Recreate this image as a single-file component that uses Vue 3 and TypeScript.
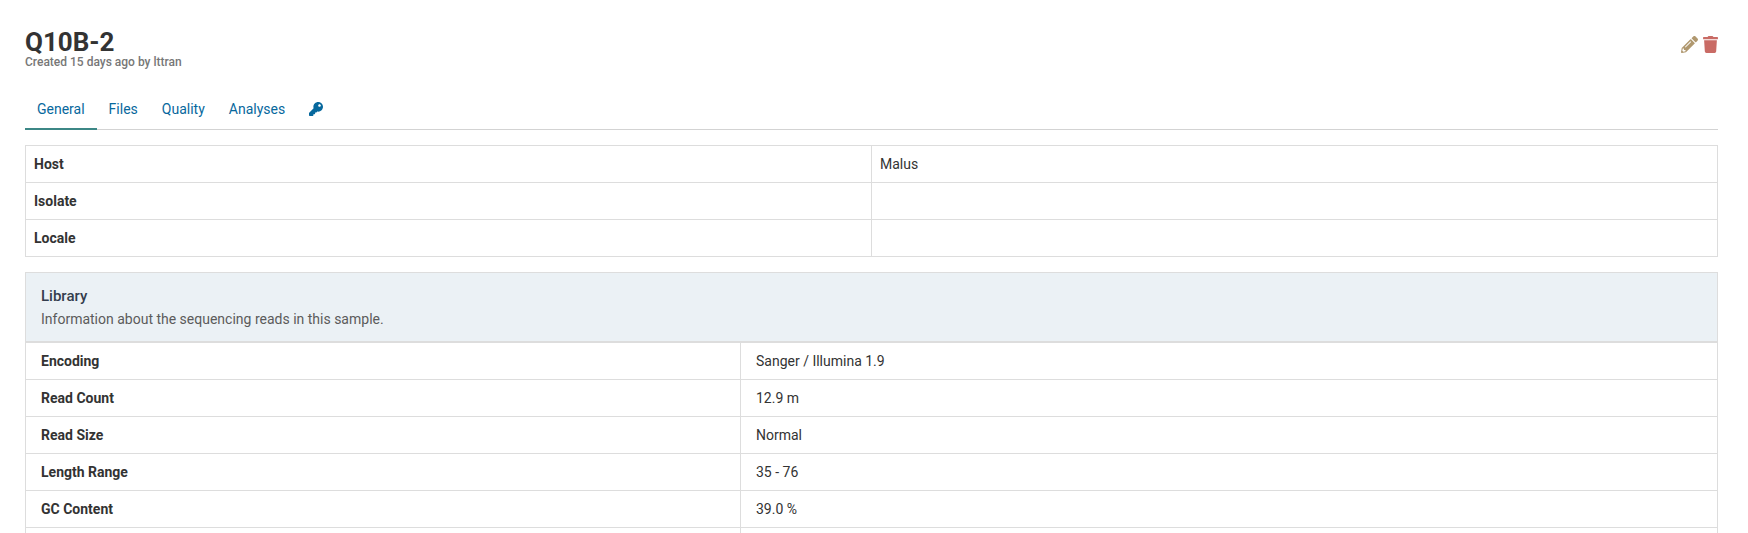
<script setup lang="ts">
interface Row {
  label: string
  value: string
}

const tabs: string[] = ['General', 'Files', 'Quality', 'Analyses']
const active = 'General'

const metadata: Row[] = [
  { label: 'Host', value: 'Malus' },
  { label: 'Isolate', value: '' },
  { label: 'Locale', value: '' },
]

const library: Row[] = [
  { label: 'Encoding', value: 'Sanger / Illumina 1.9' },
  { label: 'Read Count', value: '12.9 m' },
  { label: 'Read Size', value: 'Normal' },
  { label: 'Length Range', value: '35 - 76' },
  { label: 'GC Content', value: '39.0 %' },
  { label: '', value: '' },
]
</script>

<template>
  <main class="page">
    <header class="header">
      <div>
        <h1 class="title">Q10B-2</h1>
        <p class="created">Created 15 days ago by lttran</p>
      </div>
      <div class="actions">
        <svg class="pencil" viewBox="0 0 512 512" aria-label="Edit">
          <path d="M497.9 142.1l-46.1 46.1c-4.7 4.7-12.3 4.7-17 0l-111-111c-4.7-4.7-4.7-12.3 0-17l46.1-46.1c18.7-18.7 49.1-18.7 67.9 0l60.1 60.1c18.8 18.7 18.8 49.1 0 67.9zM284.2 99.8L21.6 362.4.4 483.9c-2.9 16.4 11.4 30.6 27.8 27.8l121.5-21.3 262.6-262.6c4.7-4.7 4.7-12.3 0-17l-111-111c-4.8-4.7-12.4-4.7-17.1 0zM124.1 339.9c-5.5-5.5-5.5-14.3 0-19.8l154-154c5.5-5.5 14.3-5.5 19.8 0s5.5 14.3 0 19.8l-154 154c-5.5 5.5-14.3 5.5-19.8 0zM88 424h48v36.3l-64.5 11.3-31.1-31.1L51.7 376H88v48z" />
        </svg>
        <svg class="trash" viewBox="0 0 448 512" aria-label="Remove">
          <path d="M432 32H312l-9.4-18.7A24 24 0 0 0 281.1 0H166.8a23.72 23.72 0 0 0-21.4 13.3L136 32H16A16 16 0 0 0 0 48v32a16 16 0 0 0 16 16h416a16 16 0 0 0 16-16V48a16 16 0 0 0-16-16zM53.2 467a48 48 0 0 0 47.9 45h245.8a48 48 0 0 0 47.9-45L416 128H32z" />
        </svg>
      </div>
    </header>

    <nav class="tabs">
      <a v-for="tab in tabs" :key="tab" class="tab" :class="{ active: tab === active }">{{ tab }}</a>
      <a class="tab">
        <svg class="key" viewBox="0 0 512 512" aria-label="Rights">
          <path d="M512 176.001C512 273.203 433.202 352 336 352c-11.22 0-22.19-1.062-32.827-3.069l-24.012 27.014A23.999 23.999 0 0 1 261.223 384H224v40c0 13.255-10.745 24-24 24h-40v40c0 13.255-10.745 24-24 24H24c-13.255 0-24-10.745-24-24v-78.059c0-6.365 2.529-12.47 7.029-16.971l161.802-161.802C163.108 213.814 160 195.271 160 176 160 78.798 238.797.001 335.999 0 433.488-.001 512 78.511 512 176.001zM336 128c0 26.51 21.49 48 48 48s48-21.49 48-48-21.49-48-48-48-48 21.49-48 48z" />
        </svg>
      </a>
    </nav>

    <dl class="table metadata">
      <div v-for="row in metadata" :key="row.label" class="row">
        <dt>{{ row.label }}</dt>
        <dd>{{ row.value }}</dd>
      </div>
    </dl>

    <section class="panel">
      <div class="panel-header">
        <h2>Library</h2>
        <p>Information about the sequencing reads in this sample.</p>
      </div>
      <dl class="table library">
        <div v-for="row in library" :key="row.label" class="row">
          <dt>{{ row.label }}</dt>
          <dd>{{ row.value }}</dd>
        </div>
      </dl>
    </section>
  </main>
</template>

<style>
body {
  margin: 0;
  background: #fff;
}
</style>

<style scoped>
.page {
  box-sizing: border-box;
  height: 533px;
  overflow: hidden;
  padding: 27px 30px 0 25px;
  color: #333;
  font: 14px/20px Roboto, "Liberation Sans", sans-serif;
}
h1, h2, p, dl, dt, dd {
  margin: 0;
}
.header {
  display: flex;
  justify-content: space-between;
  height: 64px;
}
.title {
  font-size: 26px;
  line-height: 31px;
  font-weight: 700;
}
.created {
  color: #777;
  font-size: 12px;
  line-height: 8px;
  font-weight: 500;
}
.actions {
  display: flex;
  gap: 5px;
  padding-top: 9px;
}
.actions svg {
  height: 17px;
}
.pencil {
  width: 17px;
  fill: #b0986f;
}
.trash {
  width: 15px;
  fill: #c96b65;
}
.tabs {
  display: flex;
  box-sizing: border-box;
  height: 39px;
  border-bottom: 1px solid #d3d3d3;
}
.tab {
  box-sizing: border-box;
  height: 39px;
  padding: 8px 12px 0;
  color: #07689d;
}
.active {
  border-bottom: 2px solid #3c8786;
}
.key {
  display: block;
  width: 14px;
  height: 14px;
  margin-top: 3px;
  fill: #07689d;
}
.table {
  border: 1px solid #ddd;
}
.metadata {
  margin-top: 15px;
}
.row {
  display: grid;
  height: 36px;
  line-height: 36px;
}
.row + .row {
  border-top: 1px solid #ddd;
}
.metadata .row {
  grid-template-columns: 845px 1fr;
}
.library .row {
  grid-template-columns: 714px 1fr;
}
dt {
  padding-left: 8px;
  font-weight: 700;
}
dd {
  padding-left: 8px;
  border-left: 1px solid #ddd;
}
.library dt,
.library dd {
  padding-left: 15px;
}
.panel {
  margin-top: 15px;
}
.panel-header {
  box-sizing: border-box;
  height: 70px;
  padding: 13px 15px 0;
  border: 1px solid #ddd;
  background: #ebf1f5;
}
.panel-header h2 {
  margin-bottom: 3px;
  color: #333d4d;
  font-size: 15px;
  line-height: 20px;
  font-weight: 500;
}
.panel-header p {
  color: #5b5b5b;
}
</style>
